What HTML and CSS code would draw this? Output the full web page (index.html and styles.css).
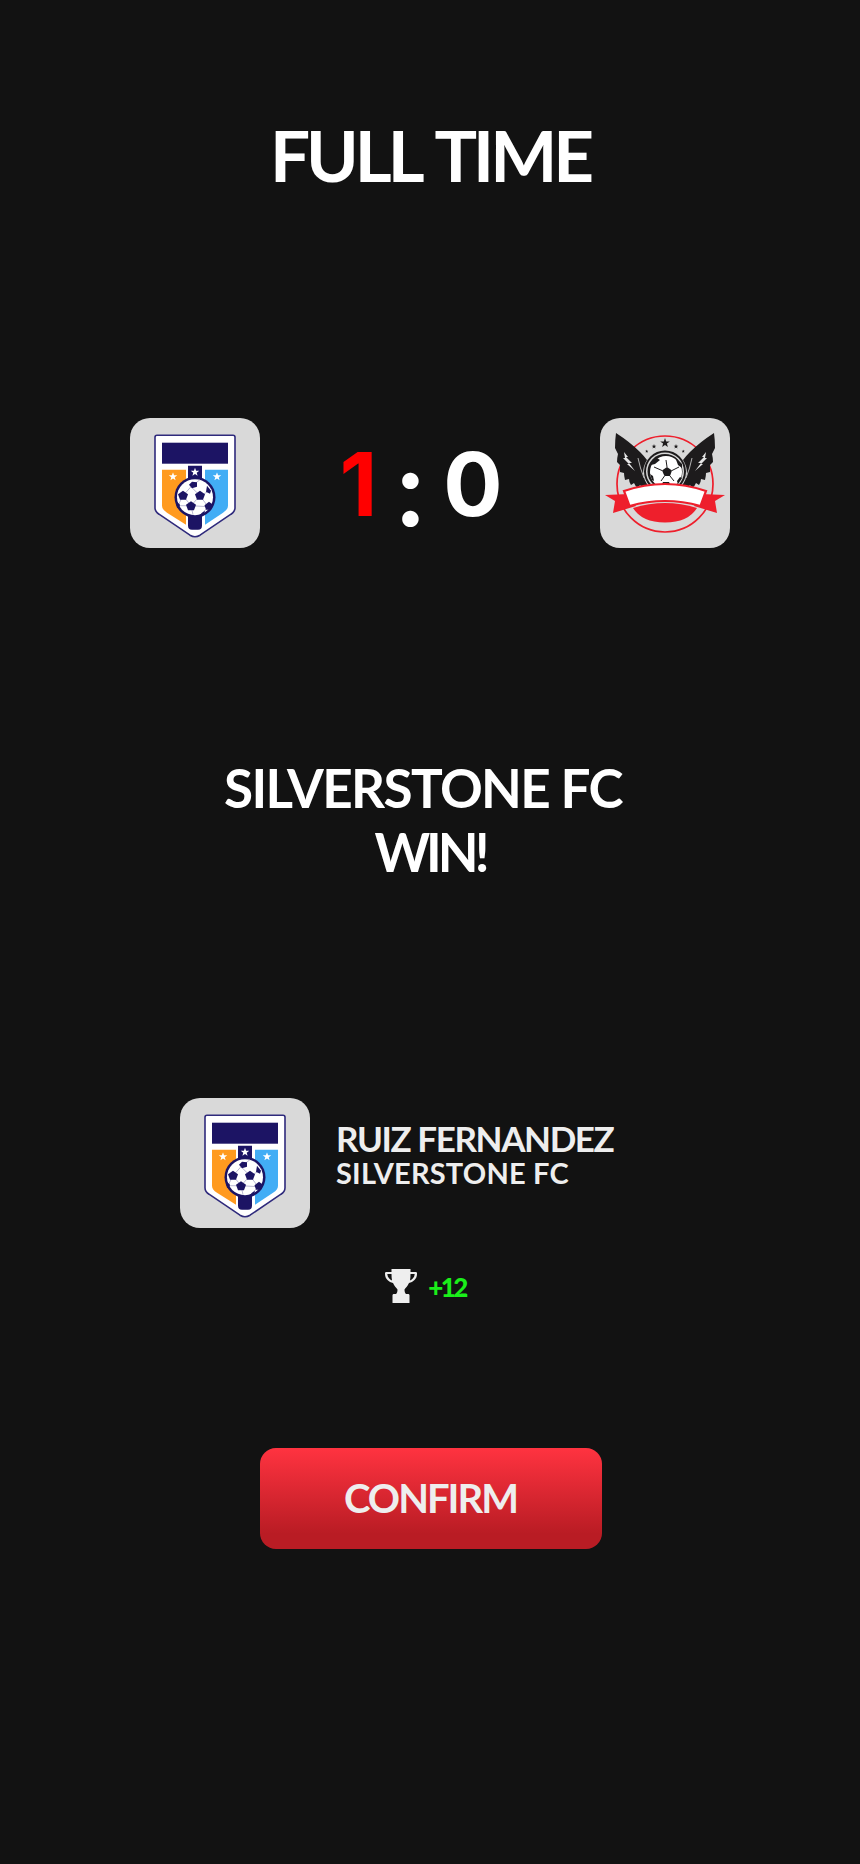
FILE: index.html
```html
<!DOCTYPE html>
<html lang="en">
<head>
<meta charset="utf-8">
<title>Full Time</title>
<link rel="stylesheet" href="styles.css">
</head>
<body>
<svg class="defs" width="0" height="0" aria-hidden="true">
  <defs>
    <symbol id="star" viewBox="-5 -5 10 10">
      <polygon points="0,-5 1.2,-1.6 4.8,-1.5 1.9,0.6 2.9,4 0,2 -2.9,4 -1.9,0.6 -4.8,-1.5 -1.2,-1.6"/>
    </symbol>
    <symbol id="crest-blue" viewBox="0 0 130 130">
      <g transform="translate(0 1.7)">
        <path d="M27 15.5H103Q105 15.5 105 17.5V88Q105 92 101 94.5L70 115.5Q65 118.5 60 115.5L29 94.5Q25 92 25 88V17.5Q25 15.5 27 15.5Z" fill="#fff" stroke="#2f2a7c" stroke-width="1.6"/>
        <rect x="32" y="23" width="66" height="21" fill="#1c1464"/>
        <path d="M32 50H56V105L37 93Q32 90 32 86Z" fill="#ff9a1f"/>
        <path d="M98 50H75V105L93 93Q98 90 98 86Z" fill="#42adf5"/>
        <path d="M58 46H72V106Q72 110 68 110H62Q58 110 58 106Z" fill="#1c1464"/>
        <use href="#star" x="38.5" y="52.5" width="9" height="9" fill="#fff"/>
        <use href="#star" x="60.5" y="48" width="9" height="9" fill="#fff"/>
        <use href="#star" x="82.5" y="52.5" width="9" height="9" fill="#fff"/>
        <circle cx="65" cy="77.5" r="20.5" fill="#1c1464"/>
        <circle cx="65" cy="77.5" r="18" fill="#fff"/>
        <g stroke="#a9a7c9" stroke-width="0.8" fill="none">
          <path d="M53 76L61 67L70 76L61 86Z"/>
          <path d="M70 76L78 87L61 86"/>
          <path d="M53 76L48 86L61 86L63 95"/>
          <path d="M61 67L70 60M70 76L82 70M78 87L72 94"/>
        </g>
        <g fill="#1c1464">
          <polygon points="53,71 58,74.5 56,80 50,80 48,74.5"/>
          <polygon points="70,71 75,74.5 73,80 67,80 65,74.5"/>
          <polygon points="61,81.5 66,85 64,90.5 58,90.5 56,85"/>
          <polygon points="79,82 83,85 81,90 76,90 74.5,85.5"/>
          <polygon points="62,62 67,62.5 67,67 62,68.5 59,65"/>
          <polygon points="47,82 50,85 49,89 47,88 46,84"/>
          <polygon points="72,93 75,91 74,94.5 69,96"/>
          <polygon points="77,66 81,71 80,74 76,72"/>
        </g>
      </g>
    </symbol>
    <symbol id="wing" viewBox="0 0 130 130">
      <path d="M16 15Q30 24 40 34Q44 38 47 42Q43 48 43 56Q44 62 48 68L44 70Q41 69 40 67L38 70Q35 68 34 65L31 67Q29 64 29 61L25 62Q24 58 24 55L20 54Q20 50 20 47L17 44Q17 40 18 36L15 30Q15 22 16 15Z" fill="#1d1b1c"/>
      <path d="M24 34L28 39L26 39L32 45L29 45L35 53L27 46L29 46L23 40L25 40Z" fill="#e6e6e6"/>
      <path d="M38 40Q40 50 44 60" fill="none" stroke="#d9d9d9" stroke-width="0.8"/>
    </symbol>
    <symbol id="crest-red" viewBox="0 0 130 130">
      <circle cx="65" cy="66" r="48" fill="none" stroke="#ee1f2c" stroke-width="1.7"/>
      <use href="#wing" width="130" height="130"/>
      <use href="#wing" width="130" height="130" transform="matrix(-1 0 0 1 130 0)"/>
      <use href="#star" x="60" y="20" width="10" height="10" fill="#1d1b1c"/>
      <use href="#star" x="51.5" y="26" width="5" height="5" fill="#1d1b1c"/>
      <use href="#star" x="73.5" y="26" width="5" height="5" fill="#1d1b1c"/>
      <use href="#star" x="45" y="31.5" width="3.5" height="3.5" fill="#1d1b1c"/>
      <use href="#star" x="81.5" y="31.5" width="3.5" height="3.5" fill="#1d1b1c"/>
      <circle cx="65" cy="53.5" r="21" fill="#1d1b1c"/>
      <circle cx="65" cy="53.5" r="19" fill="#d9d9d9"/>
      <circle cx="65" cy="53.5" r="17.5" fill="#1d1b1c"/>
      <circle cx="66" cy="54" r="16" fill="#fff"/>
      <g fill="#1d1b1c">
        <polygon points="67,49 72,52.5 70,58 64.5,58 62,52.5"/>
        <polygon points="75,39 82,46 82,50 78,47"/>
        <polygon points="57,40 60,42 55,46 51,47 53,43"/>
        <polygon points="50,56 53,58 54,63 52,62"/>
        <polygon points="63,64 69,64 71,68 61,68"/>
        <polygon points="80,59 82,60 78,66 77,63"/>
      </g>
      <g stroke="#1d1b1c" stroke-width="1" fill="none">
        <path d="M67 49L66 42M72 52.500L79 49M70 58L74 63M64.500 58L61 63M62 52.500L54 49"/>
      </g>
      <path d="M29 76L5 77L15 83L13 95L36 88Z" fill="#ee1f2c"/>
      <path d="M101 76L125 77L115 83L117 95L94 88Z" fill="#ee1f2c"/>
      <path d="M33 90Q65 80 97 90Q88 104.500 65 104.500Q42 104.500 33 90Z" fill="#ee1f2c"/>
      <path d="M24 73Q65 59 106 73L100.500 88Q65 78 29.500 88Z" fill="#fff" stroke="#ee1f2c" stroke-width="2.2"/>
    </symbol>
  </defs>
</svg>

<main class="screen">
  <h1 class="title">FULL TIME</h1>

  <section class="scoreboard">
    <div class="badge"><svg class="crest"><use href="#crest-blue"/></svg></div>
    <div class="score">
      <span class="score-home">1</span>
      <span class="score-sep">:</span>
      <span class="score-away">0</span>
    </div>
    <div class="badge"><svg class="crest"><use href="#crest-red"/></svg></div>
  </section>

  <h2 class="result"><span class="result-team">SILVERSTONE FC</span><span class="result-win">WIN!</span></h2>

  <section class="player">
    <div class="badge"><svg class="crest"><use href="#crest-blue"/></svg></div>
    <div class="player-text">
      <div class="player-name">RUIZ FERNANDEZ</div>
      <div class="player-team">SILVERSTONE FC</div>
    </div>
  </section>

  <div class="reward">
    <svg class="trophy" viewBox="0 0 32 34">
      <path fill="#eee" d="M6.5 0H25.5V3H31C32 3 32 4 32 5C32 10 28 13 24 14C22.5 17.5 20.5 19 19.5 20.5C19.5 22.5 20 24 21 25H23C24 25 24.5 25.5 24.5 26.5V34H7.5V26.5C7.5 25.5 8 25 9 25H11C12 24 12.5 22.5 12.5 20.5C11.5 19 9.5 17.5 8 14C4 13 0 10 0 5C0 4 0 3 1 3H6.5ZM2.3 5C2.5 8 4.5 10.5 7 11.5C6.6 9.5 6.5 7 6.5 5ZM29.7 5H25.5C25.5 7 25.4 9.5 25 11.5C27.5 10.5 29.5 8 29.7 5Z"/>
    </svg>
    <span class="reward-points">+12</span>
  </div>

  <button class="confirm" type="button">CONFIRM</button>
</main>
</body>
</html>
```
FILE: styles.css
```css
* {
  box-sizing: border-box;
}

html,
body {
  margin: 0;
  padding: 0;
  background: #121212;
}

body {
  font-family: "Lato", "Liberation Sans", sans-serif;
  color: #fff;
}

.defs {
  display: block;
  height: 0;
}

.screen {
  width: 860px;
  height: 1864px;
  display: flex;
  flex-direction: column;
  align-items: center;
  overflow: hidden;
}

.title {
  margin: 112px 0 0;
  font-size: 71px;
  line-height: 85px;
  font-weight: 700;
  letter-spacing: -4px;
  word-spacing: 5px;
}

.scoreboard {
  margin-top: 221px;
  width: 600px;
  display: flex;
  justify-content: space-between;
  align-items: center;
}

.badge {
  width: 130px;
  height: 130px;
  border-radius: 20px;
  background: #d9d9d9;
  flex: none;
}

.crest {
  display: block;
  width: 130px;
  height: 130px;
}

.score {
  display: flex;
  align-items: center;
  gap: 19px;
  font-family: "Inter", "Liberation Sans", sans-serif;
  font-size: 88px;
  line-height: 108px;
  font-weight: 700;
  margin-left: -18px;
  padding-top: 2px;
}

.score-home {
  color: #ff0000;
}

.score-sep {
  font-family: "Lato", "Liberation Sans", sans-serif;
  font-size: 108px;
}

.result {
  margin: 208px 0 0;
  display: flex;
  flex-direction: column;
  align-items: center;
  font-size: 53px;
  line-height: 64px;
  font-weight: 700;
}

.result-team {
  padding-right: 14px;
  letter-spacing: -1.6px;
}

.result-win {
  letter-spacing: -4px;
}

.player {
  margin-top: 214px;
  align-self: flex-start;
  margin-left: 180px;
  display: flex;
  align-items: center;
  gap: 26px;
}

.player-text {
  color: #eee;
  font-weight: 700;
  white-space: nowrap;
  padding-bottom: 18px;
}

.player-name {
  font-size: 35px;
  line-height: 36px;
  letter-spacing: -1.4px;
}

.player-team {
  margin-top: 2px;
  font-size: 29px;
  line-height: 30px;
  letter-spacing: 0.2px;
}

.reward {
  margin-top: 40px;
  margin-left: -9px;
  display: flex;
  align-items: center;
  gap: 11px;
}

.trophy {
  display: block;
  width: 32px;
  height: 34px;
}

.reward-points {
  color: #1aee1a;
  font-size: 26px;
  line-height: 34px;
  font-weight: 900;
  letter-spacing: -2.5px;
  padding-top: 2px;
}

.confirm {
  margin-top: 144px;
  margin-left: 1px;
  width: 342px;
  height: 101px;
  padding: 0 0 2px;
  border: 0;
  border-radius: 16px;
  background: linear-gradient(180deg, #ff3340 0%, #b91c24 85%);
  color: #eee;
  font-family: inherit;
  font-size: 40px;
  font-weight: 700;
  letter-spacing: -2px;
}
```
